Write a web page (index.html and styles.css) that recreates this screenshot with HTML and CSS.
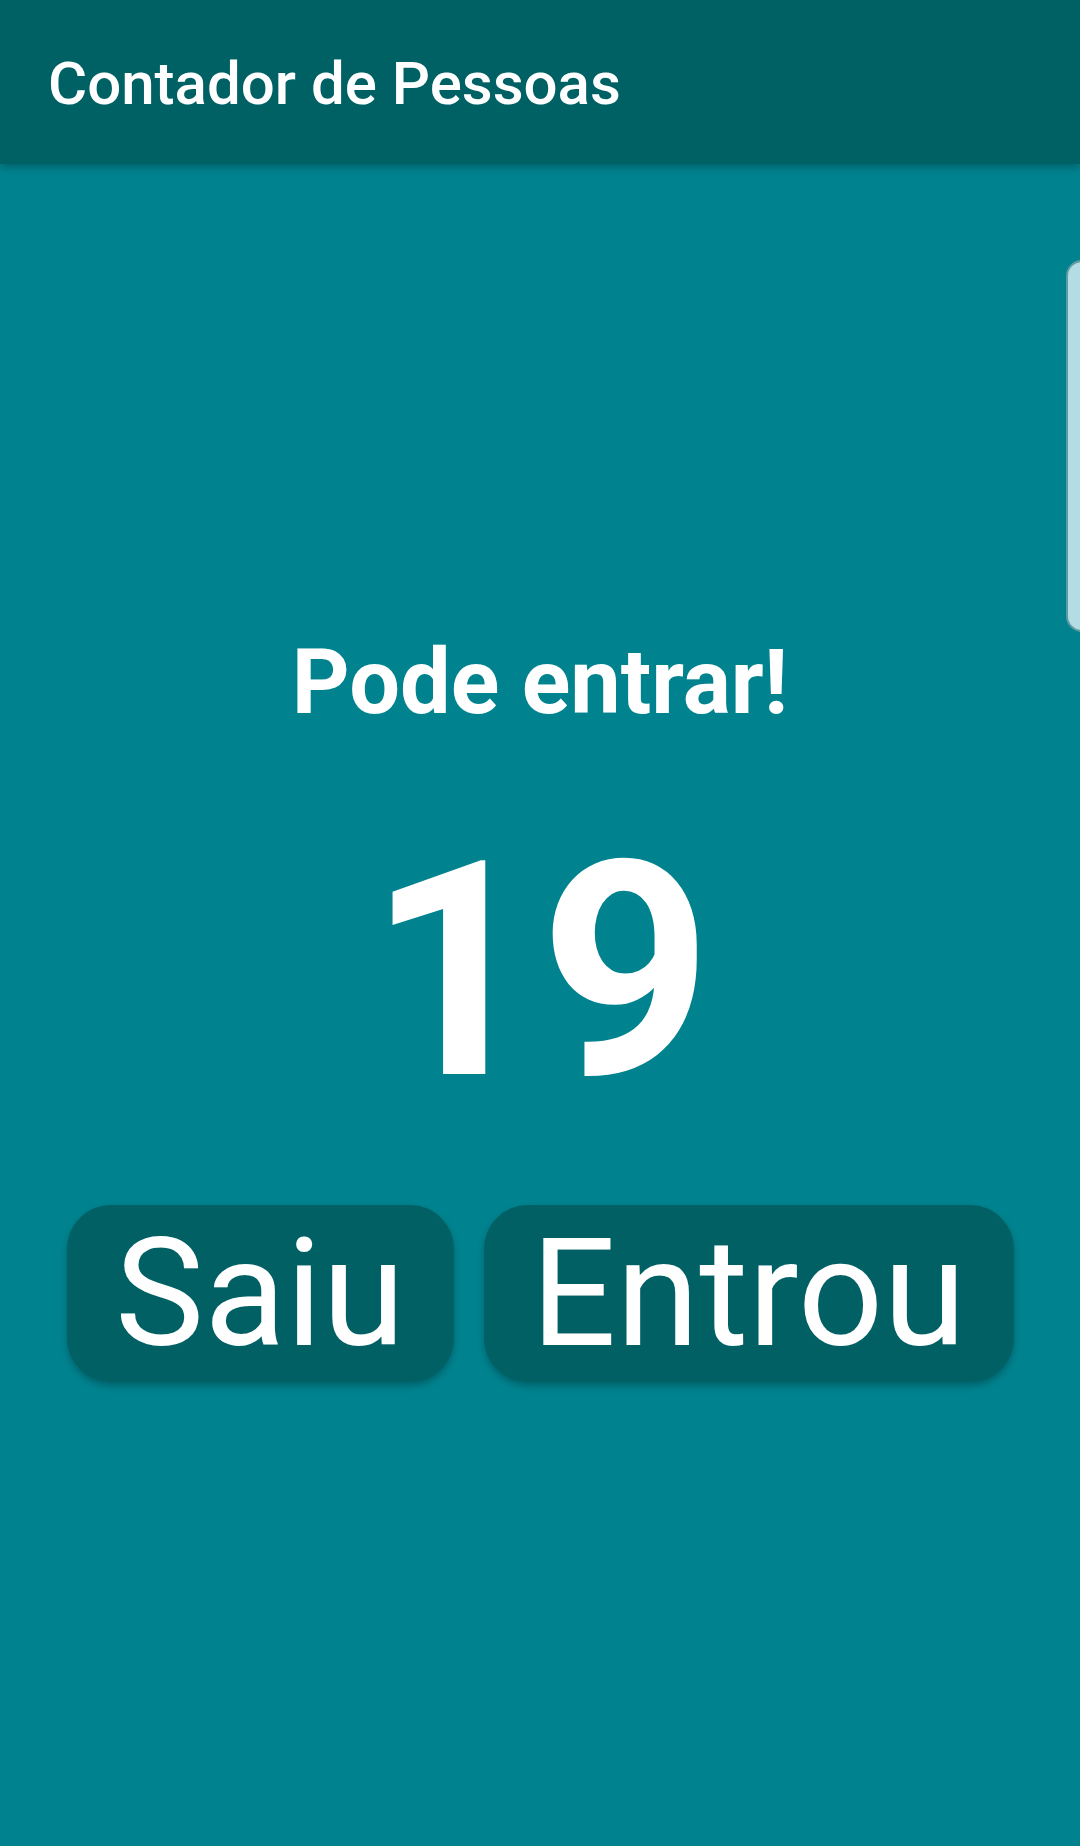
FILE: index.html
```html
<!DOCTYPE html>
<html lang="pt">
<head>
<meta charset="utf-8">
<title>Contador de Pessoas</title>
<link rel="stylesheet" href="styles.css">
</head>
<body>
<header class="toolbar">
  <h1 class="toolbar-title">Contador de Pessoas</h1>
</header>
<main class="content">
  <p class="status">Pode entrar!</p>
  <p class="count">19</p>
  <div class="actions">
    <button class="btn btn-out" type="button">Saiu</button>
    <button class="btn btn-in" type="button">Entrou</button>
  </div>
</main>
<div class="edge-panel"></div>
</body>
</html>
```
FILE: styles.css
```css
html, body {
  margin: 0;
  padding: 0;
}
body {
  width: 1080px;
  height: 1846px;
  background: #00838f;
  font-family: Roboto, "Noto Sans", sans-serif;
  color: #ffffff;
  overflow: hidden;
  position: relative;
}
.toolbar {
  height: 164px;
  box-sizing: border-box;
  padding: 49px 48px 0;
  background: #006164;
  box-shadow: 0 3px 8px rgba(0, 0, 0, 0.28);
  position: relative;
  z-index: 1;
}
.toolbar-title {
  margin: 0;
  font-size: 60px;
  line-height: 70px;
  font-weight: 500;
  color: #ffffff;
}
.content {
  display: flex;
  flex-direction: column;
  align-items: center;
  padding-top: 466px;
}
.status {
  margin: 0;
  font-size: 90px;
  font-weight: 700;
  line-height: 106px;
}
.count {
  margin: 60px 0 0;
  font-size: 300px;
  font-weight: 700;
  line-height: 352px;
}
.actions {
  display: flex;
  gap: 30px;
  margin-top: 57px;
}
.btn {
  height: 177px;
  border: none;
  border-radius: 44px;
  background: #006064;
  color: #ffffff;
  font-family: Roboto, "Noto Sans", sans-serif;
  font-size: 150px;
  font-weight: 400;
  line-height: 176px;
  padding: 0;
  box-shadow: 0 4px 7px rgba(0, 0, 0, 0.25);
}
.btn-out {
  width: 387px;
}
.btn-in {
  width: 530px;
}
.edge-panel {
  position: absolute;
  left: 1066px;
  top: 260px;
  width: 40px;
  height: 372px;
  box-sizing: border-box;
  background: #b3dde3;
  border: 2px solid #5e9ca2;
  border-radius: 16px;
}
```
